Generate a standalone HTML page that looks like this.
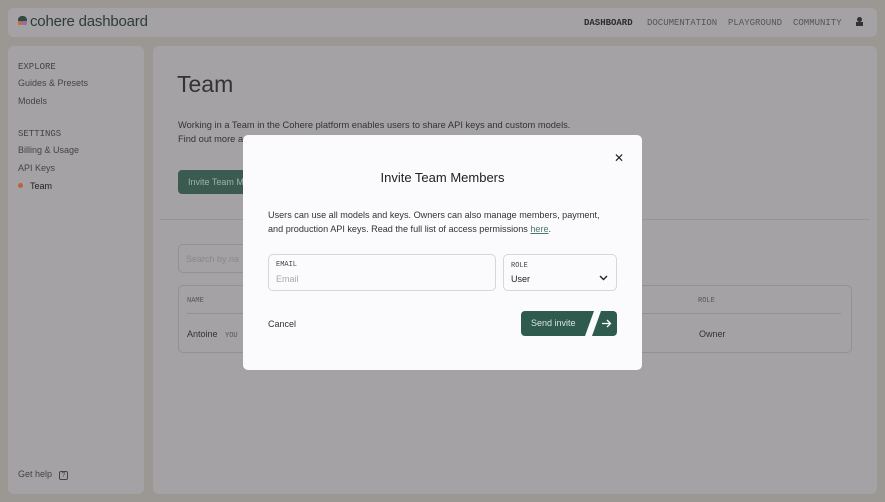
<!DOCTYPE html>
<html><head><style>
*{margin:0;padding:0;box-sizing:border-box}
body{width:885px;height:502px;background:#9b9894;font-family:"Liberation Sans",sans-serif;position:relative;overflow:hidden;color:#2b2b2b}
.p{position:absolute;background:#a4a2a5;border-radius:6px}
.mono{font-family:"Liberation Mono",monospace}
.a{position:absolute;white-space:nowrap}
</style></head><body>
<div class="p" style="left:8px;top:8px;width:869px;height:29px"></div>
<div class="a" style="left:18px;top:16px;width:9px;height:6px;background:#2f4a40;border-radius:4px 4px 2px 2px"></div>
<div class="a" style="left:18px;top:21px;width:4px;height:4px;background:#c76a4a;border-radius:1px"></div>
<div class="a" style="left:22px;top:21px;width:5px;height:4px;background:#9a6fa0;border-radius:1px"></div>
<div class="a" style="left:30px;top:13px;font-size:15px;color:#2c3d38;letter-spacing:-0.2px">cohere dashboard</div>
<div class="a mono" style="left:584px;top:18px;font-size:9px;color:#2c2c2c;font-weight:bold">DASHBOARD</div>
<div class="a mono" style="left:647px;top:18px;font-size:9px;color:#555">DOCUMENTATION</div>
<div class="a mono" style="left:728px;top:18px;font-size:9px;color:#555">PLAYGROUND</div>
<div class="a mono" style="left:793px;top:18px;font-size:9px;color:#555">COMMUNITY</div>
<div class="a" style="left:857px;top:17px;width:5px;height:5px;background:#333;border-radius:50%"></div>
<div class="a" style="left:856px;top:22px;width:7px;height:4px;background:#333"></div>

<div class="p" style="left:8px;top:46px;width:136px;height:448px"></div>
<div class="a mono" style="left:18px;top:62px;font-size:9px;color:#444">EXPLORE</div>
<div class="a" style="left:18px;top:78px;font-size:9px;color:#444">Guides &amp; Presets</div>
<div class="a" style="left:18px;top:96px;font-size:9px;color:#444">Models</div>
<div class="a mono" style="left:18px;top:129px;font-size:9px;color:#444">SETTINGS</div>
<div class="a" style="left:18px;top:145px;font-size:9px;color:#444">Billing &amp; Usage</div>
<div class="a" style="left:18px;top:163px;font-size:9px;color:#444">API Keys</div>
<div class="a" style="left:18px;top:183px;width:5px;height:5px;border-radius:50%;background:#c0603e"></div>
<div class="a" style="left:30px;top:181px;font-size:9px;color:#222">Team</div>
<div class="a" style="left:18px;top:469px;font-size:9px;color:#444">Get help <span style="border:1px solid #444;border-radius:2px;font-size:7px;padding:0 2px;margin-left:4px">?</span></div>

<div class="p" style="left:153px;top:46px;width:724px;height:448px"></div>
<div class="a" style="left:177px;top:71px;font-size:23px;color:#333">Team</div>
<div class="a" style="left:178px;top:120px;font-size:9.3px;color:#333">Working in a Team in the Cohere platform enables users to share API keys and custom models.</div>
<div class="a" style="left:178px;top:134px;font-size:9.3px;color:#333">Find out more a</div>
<div class="a" style="left:178px;top:170px;width:80px;height:24px;background:#3b5a50;border-radius:4px;color:#9fb3aa;font-size:9px;padding:7px 10px">Invite Team M</div>
<div class="a" style="left:160px;top:219px;width:710px;height:1px;background:#969497"></div>
<div class="a" style="left:178px;top:244px;width:80px;height:29px;border:1px solid #939194;border-radius:5px;font-size:9px;color:#888;padding:9px 7px">Search by na</div>
<div class="a" style="left:178px;top:285px;width:674px;height:68px;border:1px solid #939194;border-radius:5px"></div>
<div class="a mono" style="left:187px;top:297px;font-size:7px;color:#555">NAME</div>
<div class="a mono" style="left:698px;top:297px;font-size:7px;color:#555">ROLE</div>
<div class="a" style="left:187px;top:313px;width:654px;height:1px;background:#939194"></div>
<div class="a" style="left:187px;top:329px;font-size:9px;color:#333">Antoine <span class="mono" style="font-size:7px;color:#555;margin-left:5px">YOU</span></div>
<div class="a" style="left:699px;top:329px;font-size:9px;color:#333">Owner</div>

<div class="a" style="left:243px;top:135px;width:399px;height:235px;background:#fbfafc;border-radius:5px"></div>
<div class="a" style="left:614px;top:151px;font-size:12px;color:#222">✕</div>
<div class="a" style="left:243px;top:170px;width:399px;text-align:center;font-size:13px;color:#222">Invite Team Members</div>
<div class="a" style="left:268px;top:209px;font-size:9.1px;color:#333;line-height:13.5px">Users can use all models and keys. Owners can also manage members, payment,<br>and production API keys. Read the full list of access permissions <u style="color:#4a7a6a">here</u>.</div>
<div class="a" style="left:268px;top:254px;width:228px;height:37px;border:1px solid #d8d6da;border-radius:5px"></div>
<div class="a mono" style="left:276px;top:261px;font-size:7px;color:#444">EMAIL</div>
<div class="a" style="left:276px;top:274px;font-size:9px;color:#aaa">Email</div>
<div class="a" style="left:503px;top:254px;width:114px;height:37px;border:1px solid #d8d6da;border-radius:5px"></div>
<div class="a mono" style="left:511px;top:262px;font-size:7px;color:#444">ROLE</div>
<div class="a" style="left:511px;top:274px;font-size:9px;color:#222">User</div>
<svg class="a" style="left:599px;top:275px" width="9" height="6"><path d="M1 1L4.5 4.5L8 1" stroke="#222" stroke-width="1.4" fill="none"/></svg>
<div class="a" style="left:268px;top:319px;font-size:9px;color:#333">Cancel</div>
<svg class="a" style="left:521px;top:311px" width="97" height="25"><path d="M4 0H73L64 25H4A4 4 0 0 1 0 21V4A4 4 0 0 1 4 0Z" fill="#2f5a4e"/><path d="M80 0H92A4 4 0 0 1 96 4V21A4 4 0 0 1 92 25H71Z" fill="#2f5a4e"/><path d="M81 12.5H89M86 9L89.5 12.5L86 16" stroke="#fff" stroke-width="1.3" fill="none"/></svg>
<div class="a" style="left:531px;top:318px;font-size:9px;color:#dbe6e1">Send invite</div>
</body></html>
